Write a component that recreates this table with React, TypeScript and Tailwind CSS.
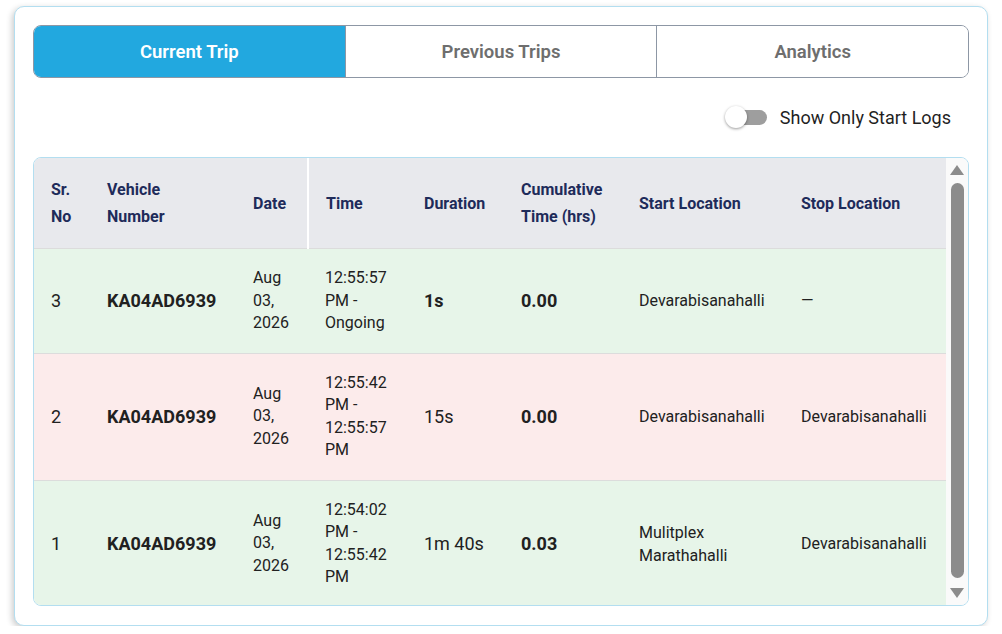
import React, { useState } from 'react';

interface Trip {
  sr: number;
  vehicle: string;
  date: string[];
  time: string[];
  duration: string;
  durationBold?: boolean;
  cumulative: string;
  start: string[];
  stop: string;
  tone: 'green' | 'red';
}

const trips: Trip[] = [
  {
    sr: 3,
    vehicle: 'KA04AD6939',
    date: ['Aug', '03,', '2026'],
    time: ['12:55:57', 'PM -', 'Ongoing'],
    duration: '1s',
    durationBold: true,
    cumulative: '0.00',
    start: ['Devarabisanahalli'],
    stop: '—',
    tone: 'green',
  },
  {
    sr: 2,
    vehicle: 'KA04AD6939',
    date: ['Aug', '03,', '2026'],
    time: ['12:55:42', 'PM -', '12:55:57', 'PM'],
    duration: '15s',
    cumulative: '0.00',
    start: ['Devarabisanahalli'],
    stop: 'Devarabisanahalli',
    tone: 'red',
  },
  {
    sr: 1,
    vehicle: 'KA04AD6939',
    date: ['Aug', '03,', '2026'],
    time: ['12:54:02', 'PM -', '12:55:42', 'PM'],
    duration: '1m 40s',
    cumulative: '0.03',
    start: ['Mulitplex', 'Marathahalli'],
    stop: 'Devarabisanahalli',
    tone: 'green',
  },
];

const tabs = ['Current Trip', 'Previous Trips', 'Analytics'];

const Lines: React.FC<{ lines: string[] }> = ({ lines }) => (
  <>
    {lines.map((l, i) => (
      <div key={i}>{l}</div>
    ))}
  </>
);

export default function App() {
  const [tab, setTab] = useState(0);
  const [startOnly, setStartOnly] = useState(false);

  const th = 'pl-[17px] pr-2 py-[18px] text-left align-middle text-[16px] font-bold leading-[27px] text-[#1e2b5a]';
  const td = 'pl-[17px] pr-2 py-[18px] align-middle text-[#212121]';

  return (
    <div className="pl-[14px] pt-[6px]" style={{ fontFamily: 'Roboto, "Liberation Sans", sans-serif' }}>
      <div className="w-[974px] h-[620px] rounded-[10px] border border-[#b3def0] bg-white p-[18px] shadow-[-2px_2px_6px_rgba(0,0,0,0.2)]">
        {/* tabs */}
        <div className="flex h-[53px] overflow-hidden rounded-[8px] border border-[#8d97a5]">
          {tabs.map((t, i) => (
            <button
              key={t}
              onClick={() => setTab(i)}
              className={
                'flex-1 pt-[2px] text-[18.5px] font-semibold ' +
                (i > 0 ? 'border-l border-[#8d97a5] ' : '') +
                (tab === i ? 'bg-[#22a8df] text-white' : 'bg-white text-[#6e6e6e]')
              }
            >
              {t}
            </button>
          ))}
        </div>

        {/* toggle */}
        <div className="mt-[19px] flex h-[40px] items-center justify-end pr-[18px]">
          <button
            onClick={() => setStartOnly(!startOnly)}
            className="relative mr-[13px] h-[15px] w-[40px] rounded-full bg-[#9e9e9e]"
          >
            <span
              className={
                'absolute top-1/2 h-[22px] w-[22px] -translate-y-1/2 rounded-full bg-white shadow-[0_1px_3px_rgba(0,0,0,0.4)] ' +
                (startOnly ? 'left-[20px]' : '-left-[2px]')
              }
            />
          </button>
          <span className="text-[18px] text-[#1f1f1f]">Show Only Start Logs</span>
        </div>

        {/* table */}
        <div className="mt-[20px] flex h-[449px] overflow-hidden rounded-[8px] border border-[#b3def0]">
          <div className="w-[912px] overflow-hidden">
            <table className="w-[912px] table-fixed border-collapse">
              <colgroup>
                <col className="w-[56px]" />
                <col className="w-[146px]" />
                <col className="w-[72px]" />
                <col className="w-[99px]" />
                <col className="w-[97px]" />
                <col className="w-[118px]" />
                <col className="w-[162px]" />
                <col className="w-[162px]" />
              </colgroup>
              <thead>
                <tr className="bg-[#e8e9ed]">
                  <th className={th}>
                    Sr.
                    <br />
                    No
                  </th>
                  <th className={th}>
                    Vehicle
                    <br />
                    Number
                  </th>
                  <th className={th + ' border-r-2 border-white'}>Date</th>
                  <th className={th}>Time</th>
                  <th className={th}>Duration</th>
                  <th className={th}>
                    Cumulative
                    <br />
                    Time (hrs)
                  </th>
                  <th className={th}>Start Location</th>
                  <th className={th}>Stop Location</th>
                </tr>
              </thead>
              <tbody>
                {trips.map((r) => (
                  <tr
                    key={r.sr}
                    className={
                      'border-t border-[#dcdcdc] ' + (r.tone === 'green' ? 'bg-[#e7f5e9]' : 'bg-[#fcebeb]')
                    }
                  >
                    <td className={td + ' text-[18px]'}>{r.sr}</td>
                    <td className={td + ' text-[18px] font-bold'}>{r.vehicle}</td>
                    <td className={td + ' text-[16px] leading-[22.5px]'}>
                      <Lines lines={r.date} />
                    </td>
                    <td className={td + ' text-[16px] leading-[22.5px]'}>
                      <Lines lines={r.time} />
                    </td>
                    <td className={td + ' text-[18px] ' + (r.durationBold ? 'font-bold' : '')}>{r.duration}</td>
                    <td className={td + ' text-[18px] font-bold'}>{r.cumulative}</td>
                    <td className={td + ' text-[16px] leading-[23px] text-[#2a2a2a]'}>
                      <Lines lines={r.start} />
                    </td>
                    <td className={td + ' text-[16px] text-[#2a2a2a]'}>{r.stop}</td>
                  </tr>
                ))}
              </tbody>
            </table>
          </div>

          {/* scrollbar */}
          <div className="flex w-[22px] flex-col items-center bg-[#fafafa] py-[7px]">
            <div className="h-0 w-0 border-x-[7px] border-b-[10px] border-x-transparent border-b-[#8c8c8c]" />
            <div className="mt-[8px] w-[13px] flex-1 rounded-full bg-[#8c8c8c]" />
            <div className="mt-[10px] h-0 w-0 border-x-[7px] border-t-[10px] border-x-transparent border-t-[#8c8c8c]" />
          </div>
        </div>
      </div>
    </div>
  );
}
